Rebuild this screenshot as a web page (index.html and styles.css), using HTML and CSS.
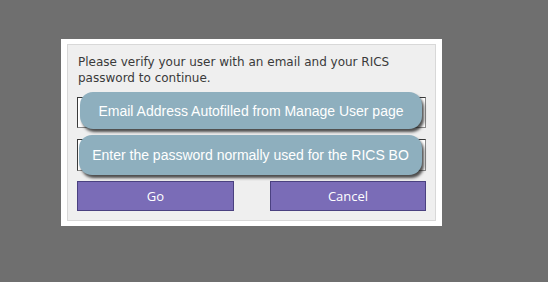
FILE: index.html
```html
<!DOCTYPE html>
<html>
<head>
<meta charset="utf-8">
<link rel="stylesheet" href="styles.css">
</head>
<body>
<div class="dialog">
  <div class="panel">
    <p class="msg">Please verify your user with an email and your RICS password to continue.</p>
    <div class="field first">
      <input class="input" type="text">
      <div class="callout c1">Email Address Autofilled from Manage User page</div>
    </div>
    <div class="field second">
      <input class="input" type="password">
      <div class="callout c2">Enter the password normally used for the RICS BO</div>
    </div>
    <div class="buttons">
      <button class="btn">Go</button>
      <button class="btn">Cancel</button>
    </div>
  </div>
</div>
</body>
</html>
```
FILE: styles.css
```css
html, body {
  margin: 0;
  padding: 0;
  background: #6f6f6f;
  width: 548px;
  height: 282px;
  overflow: hidden;
}
body {
  padding: 39px 0 0 61px;
  box-sizing: border-box;
}
.dialog {
  width: 381px;
  height: 187px;
  background: #ffffff;
  box-sizing: border-box;
  padding: 5px 6px;
}
.panel {
  width: 369px;
  height: 177px;
  box-sizing: border-box;
  background: #efefef;
  border: 1px solid #d8d8d8;
  padding: 9px 9px 0 9px;
  display: flex;
  flex-direction: column;
}
.msg {
  margin: 0 0 0 1px;
  font-family: "DejaVu Sans", Verdana, sans-serif;
  font-size: 12px;
  line-height: 16px;
  color: #3a3a3a;
  height: 43px;
}
.field {
  position: relative;
  height: 31px;
}
.field.second {
  margin-top: 11px;
  height: 32px;
}
.input {
  display: block;
  width: 349px;
  height: 100%;
  box-sizing: border-box;
  margin: 0;
  border: 1px solid;
  border-color: #3a3a3a #8a8a8a #8a8a8a #3a3a3a;
  background: #ffffff;
}
.callout {
  position: absolute;
  box-sizing: border-box;
  background: #8eafbe;
  color: #ffffff;
  font-family: "Liberation Sans", Arial, sans-serif;
  font-size: 14px;
  border-radius: 13px;
  box-shadow: 2px 3px 3px rgba(20, 20, 20, 0.75);
  display: flex;
  align-items: center;
  justify-content: center;
  white-space: nowrap;
}
.c1 {
  left: 3px;
  top: -5px;
  width: 342px;
  height: 37px;
}
.c2 {
  left: 2px;
  top: -4px;
  width: 343px;
  height: 40px;
}
.buttons {
  margin-top: 10px;
  display: flex;
  justify-content: space-between;
}
.btn {
  width: 157px;
  height: 30px;
  background: #7a6cb7;
  border: 1px solid #4a4180;
  color: #ffffff;
  font-family: "Open Sans", "Noto Sans", sans-serif;
  font-size: 13px;
  padding: 0;
}
.btn + .btn {
  width: 156px;
}
```
